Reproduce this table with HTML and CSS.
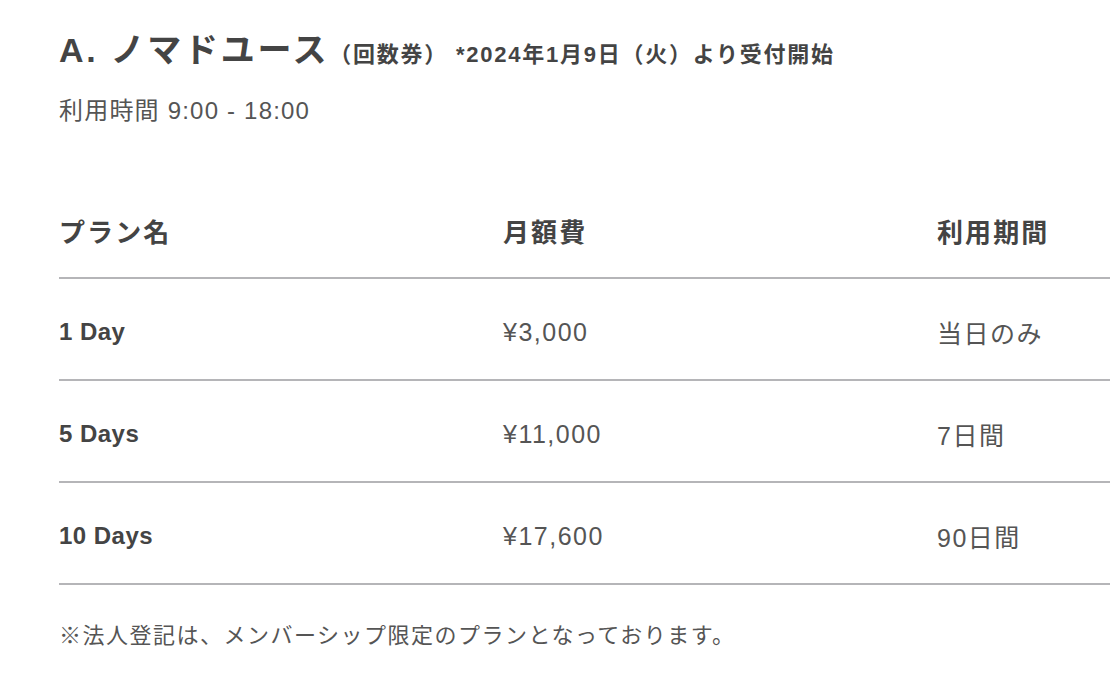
FILE: index.html
```html
<!DOCTYPE html>
<html lang="ja">
<head>
<meta charset="utf-8">
<title>ノマドユース</title>
<link rel="stylesheet" href="styles.css">
</head>
<body>
<section class="plan">
  <h2 class="plan-title">A. ノマドユース<span class="plan-sub">（回数券） *2024年1月9日（火）より受付開始</span></h2>
  <p class="plan-hours">利用時間 9:00 - 18:00</p>
  <div class="table">
    <div class="row head">
      <div class="cell">プラン名</div>
      <div class="cell">月額費</div>
      <div class="cell">利用期間</div>
    </div>
    <div class="row">
      <div class="cell name">1 Day</div>
      <div class="cell">¥3,000</div>
      <div class="cell">当日のみ</div>
    </div>
    <div class="row">
      <div class="cell name">5 Days</div>
      <div class="cell">¥11,000</div>
      <div class="cell">7日間</div>
    </div>
    <div class="row">
      <div class="cell name">10 Days</div>
      <div class="cell">¥17,600</div>
      <div class="cell">90日間</div>
    </div>
  </div>
  <p class="note">※法人登記は、メンバーシップ限定のプランとなっております。</p>
</section>
</body>
</html>
```

FILE: styles.css
```css
html, body {
  margin: 0;
  padding: 0;
  background: #fff;
}
body {
  font-family: "Liberation Sans", "Noto Sans CJK JP", sans-serif;
  color: #555;
}
.plan {
  padding: 28px 0 0 59px;
}
.plan-title {
  margin: 0;
  font-size: 34px;
  font-weight: 700;
  color: #444;
  line-height: 44px;
  letter-spacing: 0.08em;
}
.plan-sub {
  font-size: 22px;
  letter-spacing: 0.08em;
}
.plan-hours {
  margin: 18px 0 0;
  font-size: 24px;
  line-height: 32px;
  letter-spacing: 0.05em;
  color: #555;
}
.table {
  margin-top: 85px;
}
.row {
  display: grid;
  grid-template-columns: 444px 434px 1fr;
  align-items: center;
  height: 102px;
  padding-top: 6px;
  box-sizing: border-box;
  border-bottom: 2px solid #b5b5b8;
}
.row.head {
  height: 67px;
  padding-top: 0;
  align-items: start;
}
.cell {
  font-size: 25px;
  letter-spacing: 0.06em;
  color: #555;
}
.head .cell {
  font-size: 26px;
  font-weight: 700;
  letter-spacing: 0.08em;
  color: #444;
}
.cell.name {
  font-weight: 700;
  font-size: 24px;
  letter-spacing: 0.02em;
  color: #444;
}
.note {
  margin: 36px 0 0;
  font-size: 22px;
  line-height: 30px;
  letter-spacing: 1.5px;
  color: #555;
}
```
